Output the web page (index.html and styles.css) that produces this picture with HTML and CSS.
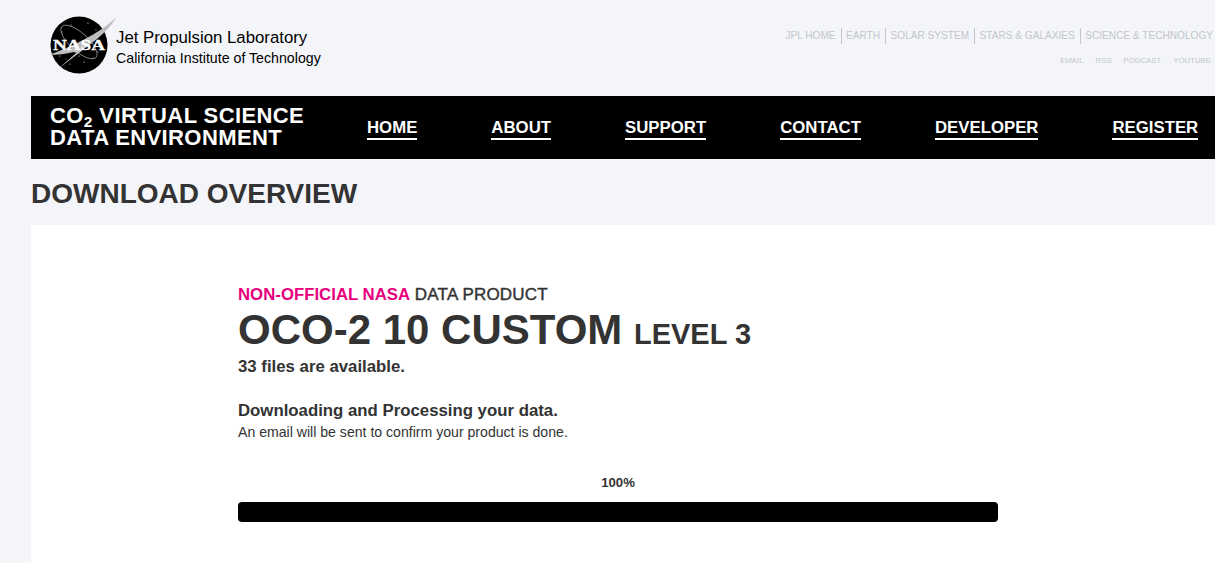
FILE: index.html
```html
<!DOCTYPE html>
<html lang="en">
<head>
<meta charset="utf-8">
<title>Download Overview</title>
<link rel="stylesheet" href="styles.css">
</head>
<body>
<header class="top">
  <div class="jpl">
    <svg class="meatball" width="72" height="62" viewBox="0 0 72 62" aria-hidden="true">
      <circle cx="33" cy="33" r="28.5" fill="#000"/>
      <g fill="#fff"><circle cx="16" cy="20" r=".5"/><circle cx="25" cy="13" r=".5"/><circle cx="42" cy="11" r=".6"/><circle cx="50" cy="18" r=".5"/><circle cx="14" cy="44" r=".6"/><circle cx="24" cy="52" r=".5"/><circle cx="38" cy="50" r=".6"/><circle cx="47" cy="46" r=".5"/><circle cx="33" cy="44" r=".5"/><circle cx="20" cy="47" r=".4"/><circle cx="52" cy="40" r=".5"/></g>
      <ellipse cx="33" cy="30" rx="23" ry="9" transform="rotate(42 33 30)" fill="none" stroke="#999" stroke-width=".8"/>
      <path d="M3 43 C25 35 52 22 70 6 C60 22 44 33 30 41 L28 40 C20 42 11 43 3 43Z" fill="#bdbdbd"/>
      <path d="M12 57 L44 29 L46 31Z" fill="#c8c8c8"/>
      <text class="meatball-text" x="33" y="38" text-anchor="middle" textLength="52" lengthAdjust="spacingAndGlyphs">NASA</text>
    </svg>
    <div class="jpl-text">
      <div class="jpl-name">Jet Propulsion Laboratory</div>
      <div class="jpl-sub">California Institute of Technology</div>
    </div>
  </div>
  <div class="links">
    <ul class="links-main">
      <li>JPL HOME</li><li>EARTH</li><li>SOLAR SYSTEM</li><li>STARS &amp; GALAXIES</li><li>SCIENCE &amp; TECHNOLOGY</li>
    </ul>
    <ul class="links-small">
      <li>EMAIL</li><li>RSS</li><li>PODCAST</li><li>YOUTUBE</li>
    </ul>
  </div>
</header>
<nav class="bar">
  <div class="brand">CO<sub class="sub2">2</sub> VIRTUAL SCIENCE<br>DATA ENVIRONMENT</div>
  <ul class="menu">
    <li><a>HOME</a></li><li><a>ABOUT</a></li><li><a>SUPPORT</a></li><li><a>CONTACT</a></li><li><a>DEVELOPER</a></li><li><a>REGISTER</a></li>
  </ul>
</nav>
<h1 class="page-title">DOWNLOAD OVERVIEW</h1>
<main class="panel">
  <div class="content">
    <p class="kicker"><span class="pink">NON-OFFICIAL NASA</span> <span class="kicker-rest">DATA PRODUCT</span></p>
    <h2 class="product">OCO-2 10 CUSTOM <span class="level">LEVEL 3</span></h2>
    <p class="avail">33 files are available.</p>
    <p class="status">Downloading and Processing your data.</p>
    <p class="note">An email will be sent to confirm your product is done.</p>
    <div class="pct">100%</div>
    <div class="progress"></div>
  </div>
</main>
</body>
</html>
```
FILE: styles.css
```css
* { box-sizing: border-box; }
html, body { margin: 0; height: 100%; }
body {
  background: #f3f5f9;
  color: #333;
  font-family: "Liberation Sans", Arial, sans-serif;
  overflow: hidden;
}
ul { list-style: none; margin: 0; padding: 0; }
p, h1, h2 { margin: 0; }
.top {
  height: 96px;
  display: flex;
  justify-content: space-between;
  padding-left: 46px;
}
.jpl { display: flex; align-items: flex-start; padding-top: 12px; }
.meatball { display: block; }
.meatball-text {
  font-family: "Liberation Serif", serif;
  font-weight: 700;
  font-size: 15px;
  fill: #fff;
  stroke: #fff;
  stroke-width: .3px;
}
.jpl-text { color: #000; margin-left: -2px; padding-top: 16px; }
.jpl-name { font-size: 16.8px; line-height: 20px; }
.jpl-sub { font-size: 14.2px; line-height: 20px; }
.links { padding-top: 28px; padding-right: 2px; color: #c4c6cb; }
.links-main { display: flex; justify-content: flex-end; font-size: 10.1px; line-height: 16px; white-space: nowrap; }
.links-main li { padding-left: 4.5px; margin-left: 5px; border-left: 1px solid #c4c6cb; }
.links-main li:first-child { border-left: 0; }
.links-small { display: flex; justify-content: flex-end; gap: 12px; font-size: 7.8px; line-height: 12px; margin-top: 11px; padding-right: 2px; }
.bar {
  height: 63px;
  margin-left: 31px;
  background: #000;
  color: #fff;
  display: flex;
  align-items: center;
  padding-left: 19px;
}
.brand { flex: none; width: 317px; padding-bottom: 2px; font-size: 22px; font-weight: 700; line-height: 22px; white-space: nowrap; letter-spacing: .4px; }
.sub2 { font-size: 15.5px; line-height: 0; vertical-align: -4px; }
.menu { flex: none; display: flex; gap: 74px; margin-top: 2px; font-size: 16.8px; font-weight: 700; white-space: nowrap; }
.menu a { display: block; line-height: 20px; padding-top: 1px; border-bottom: 2px solid #fff; }
.page-title { margin-left: 31px; font-size: 28px; line-height: 32px; height: 66px; padding-top: 19px; font-weight: 700; color: #333; }
.panel { margin-left: 31px; background: #fff; height: 338px; padding: 60px 0 0 207px; }
.content { width: 760px; }
.kicker { font-size: 16.8px; line-height: 20px; }
.kicker-rest { font-size: 17px; letter-spacing: .2px; -webkit-text-stroke: .4px #333; }
.pink { color: #e6007e; font-weight: 700; }
.product { font-size: 42px; line-height: 44px; font-weight: 700; margin-top: 3px; }
.level { font-size: 29px; }
.avail { font-size: 16.8px; line-height: 20px; font-weight: 700; margin-top: 1px; }
.status { font-size: 16.8px; line-height: 20px; font-weight: 700; margin-top: 24px; }
.note { font-size: 14.1px; line-height: 18px; margin-top: 2px; }
.pct { font-size: 13.2px; line-height: 16px; font-weight: 700; text-align: center; margin-top: 34px; }
.progress { height: 20px; background: #000; border-radius: 4px; margin-top: 11px; }
```
